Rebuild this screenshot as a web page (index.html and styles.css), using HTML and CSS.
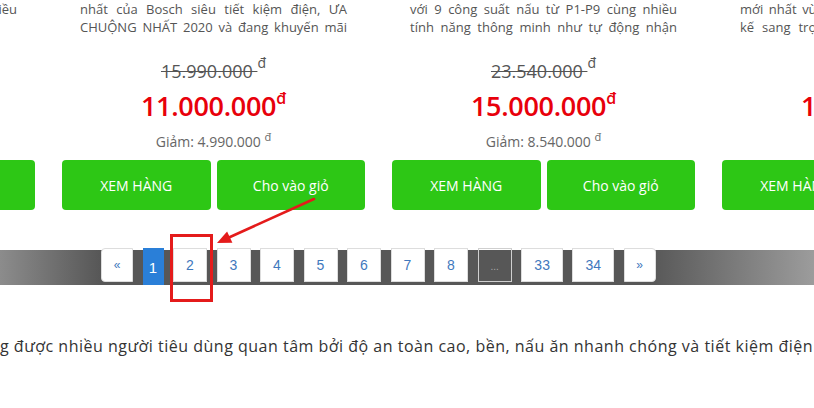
FILE: index.html
```html
<!DOCTYPE html>
<html lang="vi">
<head>
<meta charset="utf-8">
<title>Sản phẩm</title>
<link rel="stylesheet" href="styles.css">
</head>
<body>
<div class="page">
  <div class="products">
    <div class="card">
      <div class="desc"><span class="full">Bếp từ đôi nhập khẩu Đức với nhiều</span><span>tính năng.</span></div>
      <div class="old">15.990.000 <sup>đ</sup></div>
      <div class="new">10.500.000<sup>đ</sup></div>
      <div class="save">Giảm: 5.490.000 <sup>đ</sup></div>
      <div class="actions"><a class="btn">XEM HÀNG</a><a class="btn">Cho vào giỏ</a></div>
    </div>
    <div class="card">
      <div class="desc"><span class="full">nhất của Bosch siêu tiết kiệm điện, ƯA</span><span class="full">CHUỘNG NHẤT 2020 và đang khuyến mãi</span></div>
      <div class="old">15.990.000 <sup>đ</sup></div>
      <div class="new">11.000.000<sup>đ</sup></div>
      <div class="save">Giảm: 4.990.000 <sup>đ</sup></div>
      <div class="actions"><a class="btn">XEM HÀNG</a><a class="btn">Cho vào giỏ</a></div>
    </div>
    <div class="card">
      <div class="desc"><span class="full">với 9 công suất nấu từ P1-P9 cùng nhiều</span><span class="full">tính năng thông minh như tự động nhận</span></div>
      <div class="old">23.540.000 <sup>đ</sup></div>
      <div class="new">15.000.000<sup>đ</sup></div>
      <div class="save">Giảm: 8.540.000 <sup>đ</sup></div>
      <div class="actions"><a class="btn">XEM HÀNG</a><a class="btn">Cho vào giỏ</a></div>
    </div>
    <div class="card">
      <div class="desc"><span class="full">mới nhất vừa được Bosch ra mắt với thiết</span><span class="full">kế sang trọng, hiện đại cùng nhiều tính</span></div>
      <div class="old">22.990.000 <sup>đ</sup></div>
      <div class="new">16.900.000<sup>đ</sup></div>
      <div class="save">Giảm: 6.090.000 <sup>đ</sup></div>
      <div class="actions"><a class="btn">XEM HÀNG</a><a class="btn">Cho vào giỏ</a></div>
    </div>
  </div>

  <nav class="pager">
    <ul class="pagination">
      <li class="first"><a>«</a></li>
      <li class="active"><span>1</span></li>
      <li><a>2</a></li>
      <li><a>3</a></li>
      <li><a>4</a></li>
      <li><a>5</a></li>
      <li><a>6</a></li>
      <li><a>7</a></li>
      <li><a>8</a></li>
      <li class="dots"><span>...</span></li>
      <li><a>33</a></li>
      <li><a>34</a></li>
      <li class="last"><a>»</a></li>
    </ul>
  </nav>

  <p class="intro">g được nhiều người tiêu dùng quan tâm bởi độ an toàn cao, bền, nấu ăn nhanh chóng và tiết kiệm điện năng.</p>

  <svg class="annot" width="814" height="408" viewBox="0 0 814 408">
    <rect x="171.5" y="235.5" width="40" height="65" fill="none" stroke="#e41b1b" stroke-width="3"/>
    <line x1="314" y1="199" x2="229.5" y2="237.3" stroke="#e41b1b" stroke-width="2.6" stroke-linecap="round"/>
    <polygon points="217,243 232.4,242.8 227.1,231.4" fill="#e41b1b"/>
  </svg>
</div>
</body>
</html>
```
FILE: styles.css
```css
html, body {
  margin: 0;
  padding: 0;
  background: #fff;
}
body {
  width: 814px;
  height: 408px;
  overflow: hidden;
  font-family: "Open Sans", "Noto Sans", sans-serif;
}
.page {
  position: relative;
  width: 814px;
  height: 408px;
  overflow: hidden;
}
.products {
  display: flex;
  gap: 27px;
  margin-left: -268px;
}
.card {
  flex: none;
  width: 303px;
  display: flex;
  flex-direction: column;
  align-items: center;
}
.desc {
  align-self: stretch;
  padding: 0 18px;
  font-size: 13px;
  line-height: 18px;
  color: #555;
}
.desc span {
  display: block;
  white-space: nowrap;
}
.desc span.full {
  text-align: justify;
  text-align-last: justify;
  white-space: normal;
}
.old {
  margin-top: 23px;
  font-size: 18px;
  line-height: 24px;
  color: #555;
  text-decoration: line-through;
  text-decoration-thickness: 1px;
}
.old sup {
  display: inline-block;
  font-size: 14px;
  line-height: 0;
  vertical-align: 10px;
  text-decoration: none;
}
.new {
  margin-top: 6px;
  font-size: 27px;
  line-height: 34px;
  font-weight: 600;
  color: #e8000b;
  letter-spacing: -0.3px;
}
.new sup {
  font-size: 16px;
  line-height: 0;
  vertical-align: 12px;
}
.save {
  margin-top: 9px;
  font-size: 14px;
  line-height: 20px;
  color: #666;
}
.save sup {
  font-size: 11px;
  line-height: 0;
  vertical-align: 6px;
}
.actions {
  align-self: stretch;
  display: flex;
  gap: 6px;
  margin-top: 8px;
}
.btn {
  flex: 1;
  height: 50px;
  display: flex;
  align-items: center;
  justify-content: center;
  background: #2dc715;
  color: #fff;
  border-radius: 4px;
  font-size: 14px;
  font-weight: 500;
}
.pager {
  margin-top: 40px;
  height: 35px;
  background: linear-gradient(to right, #8c8c8c 0, #575757 100px, #575757 650px, #9c9c9c 814px);
}
.pagination {
  list-style: none;
  margin: 0;
  padding: 0 0 0 101px;
  position: relative;
  top: -2px;
  display: flex;
  align-items: flex-start;
  gap: 9.5px;
  font-family: "Liberation Sans", Arial, sans-serif;
  font-size: 14px;
}
.pagination li a,
.pagination li span {
  display: block;
  box-sizing: border-box;
  height: 34px;
  min-width: 34px;
  padding: 0 12px;
  line-height: 32px;
  text-align: center;
  background: #fff;
  border: 1px solid #ddd;
  color: #3f78bd;
}
.pagination li.first a {
  min-width: 32px;
  padding: 0 10px;
  border-radius: 4px 0 0 4px;
  font-size: 12px;
}
.pagination li.last a {
  min-width: 32px;
  padding: 0 10px;
  border-radius: 0 4px 4px 0;
  font-size: 12px;
}
.pagination li.active span {
  min-width: 21px;
  width: 21px;
  height: 37px;
  padding: 0;
  line-height: 39px;
  border: 0;
  background: #2a7fd8;
  color: #fff;
  font-size: 15px;
}
.pagination li.dots span {
  background: transparent;
  border-color: #cfcfcf;
  color: #aaa;
  font-size: 10px;
  line-height: 36px;
}
.intro {
  margin: 49px 0 0 0;
  white-space: nowrap;
  font-size: 16px;
  letter-spacing: 0.5px;
  line-height: 24px;
  color: #333;
}
.annot {
  position: absolute;
  left: 0;
  top: 0;
  pointer-events: none;
}
```
